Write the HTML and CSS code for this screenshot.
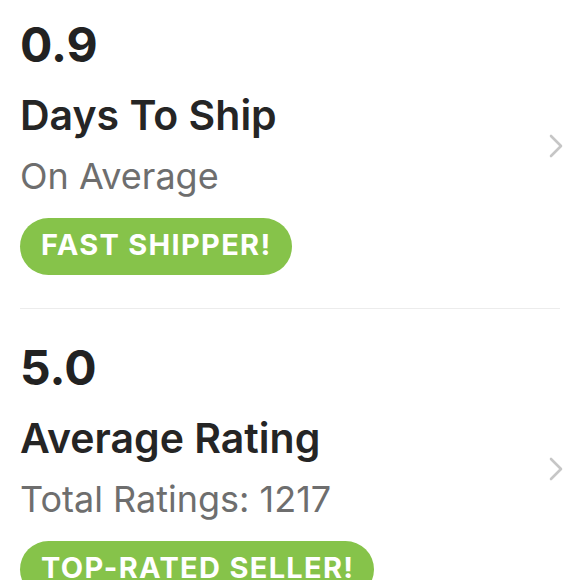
FILE: index.html
```html
<!DOCTYPE html>
<html lang="en">
<head>
    <meta charset="UTF-8">
    <meta name="viewport" content="width=device-width, initial-scale=1.0">
    <title>Seller Stats</title>
    <link rel="stylesheet" href="styles.css">
</head>
<body>
    <div class="stats">
        <!-- Shipping -->
        <a class="stat-row" href="#">
            <div class="stat-info">
                <div class="stat-value">0.9</div>
                <div class="stat-title">Days To Ship</div>
                <div class="stat-sub">On Average</div>
                <span class="badge">FAST SHIPPER!</span>
            </div>
            <svg class="chevron" width="14" height="24" viewBox="0 0 14 24">
                <path d="M2 2 L12 12 L2 22" fill="none" stroke="#c6c6c6" stroke-width="2.6" stroke-linecap="round" stroke-linejoin="round"/>
            </svg>
        </a>

        <!-- Ratings -->
        <a class="stat-row" href="#">
            <div class="stat-info">
                <div class="stat-value">5.0</div>
                <div class="stat-title">Average Rating</div>
                <div class="stat-sub">Total Ratings: 1217</div>
                <span class="badge">TOP-RATED SELLER!</span>
            </div>
            <svg class="chevron" width="14" height="24" viewBox="0 0 14 24">
                <path d="M2 2 L12 12 L2 22" fill="none" stroke="#c6c6c6" stroke-width="2.6" stroke-linecap="round" stroke-linejoin="round"/>
            </svg>
        </a>
    </div>
</body>
</html>
```

FILE: styles.css
```css
body {
    font-family: Inter, Lato, Arial, sans-serif;
    background-color: #ffffff;
    color: #222222;
    margin: 0;
}

.stats {
    margin: 0 20px;
}

.stat-row {
    display: flex;
    justify-content: space-between;
    align-items: center;
    padding: 30px 0 33px;
    border-bottom: 1px solid #ececec;
    text-decoration: none;
    color: inherit;
}

.stat-row:first-child {
    padding-top: 16px;
}

.stat-info {
    display: flex;
    flex-direction: column;
    align-items: flex-start;
}

.stat-value {
    font-size: 48px;
    font-weight: 700;
    line-height: 1.2;
    color: #222222;
}

.stat-title {
    font-size: 41px;
    font-weight: 600;
    line-height: 1.2;
    margin-top: 17px;
    color: #252525;
}

.stat-sub {
    font-size: 36px;
    font-weight: 400;
    line-height: 1.2;
    margin-top: 15px;
    color: #6e6e6e;
}

.badge {
    display: inline-block;
    box-sizing: border-box;
    height: 57px;
    line-height: 53px;
    margin-top: 20px;
    padding: 0 20px 0 21px;
    border-radius: 29px;
    background-color: #86c34a;
    color: #ffffff;
    font-size: 29px;
    font-weight: 700;
    letter-spacing: 1.3px;
}

.chevron {
    margin-right: -3px;
    margin-top: 2px;
}
```
